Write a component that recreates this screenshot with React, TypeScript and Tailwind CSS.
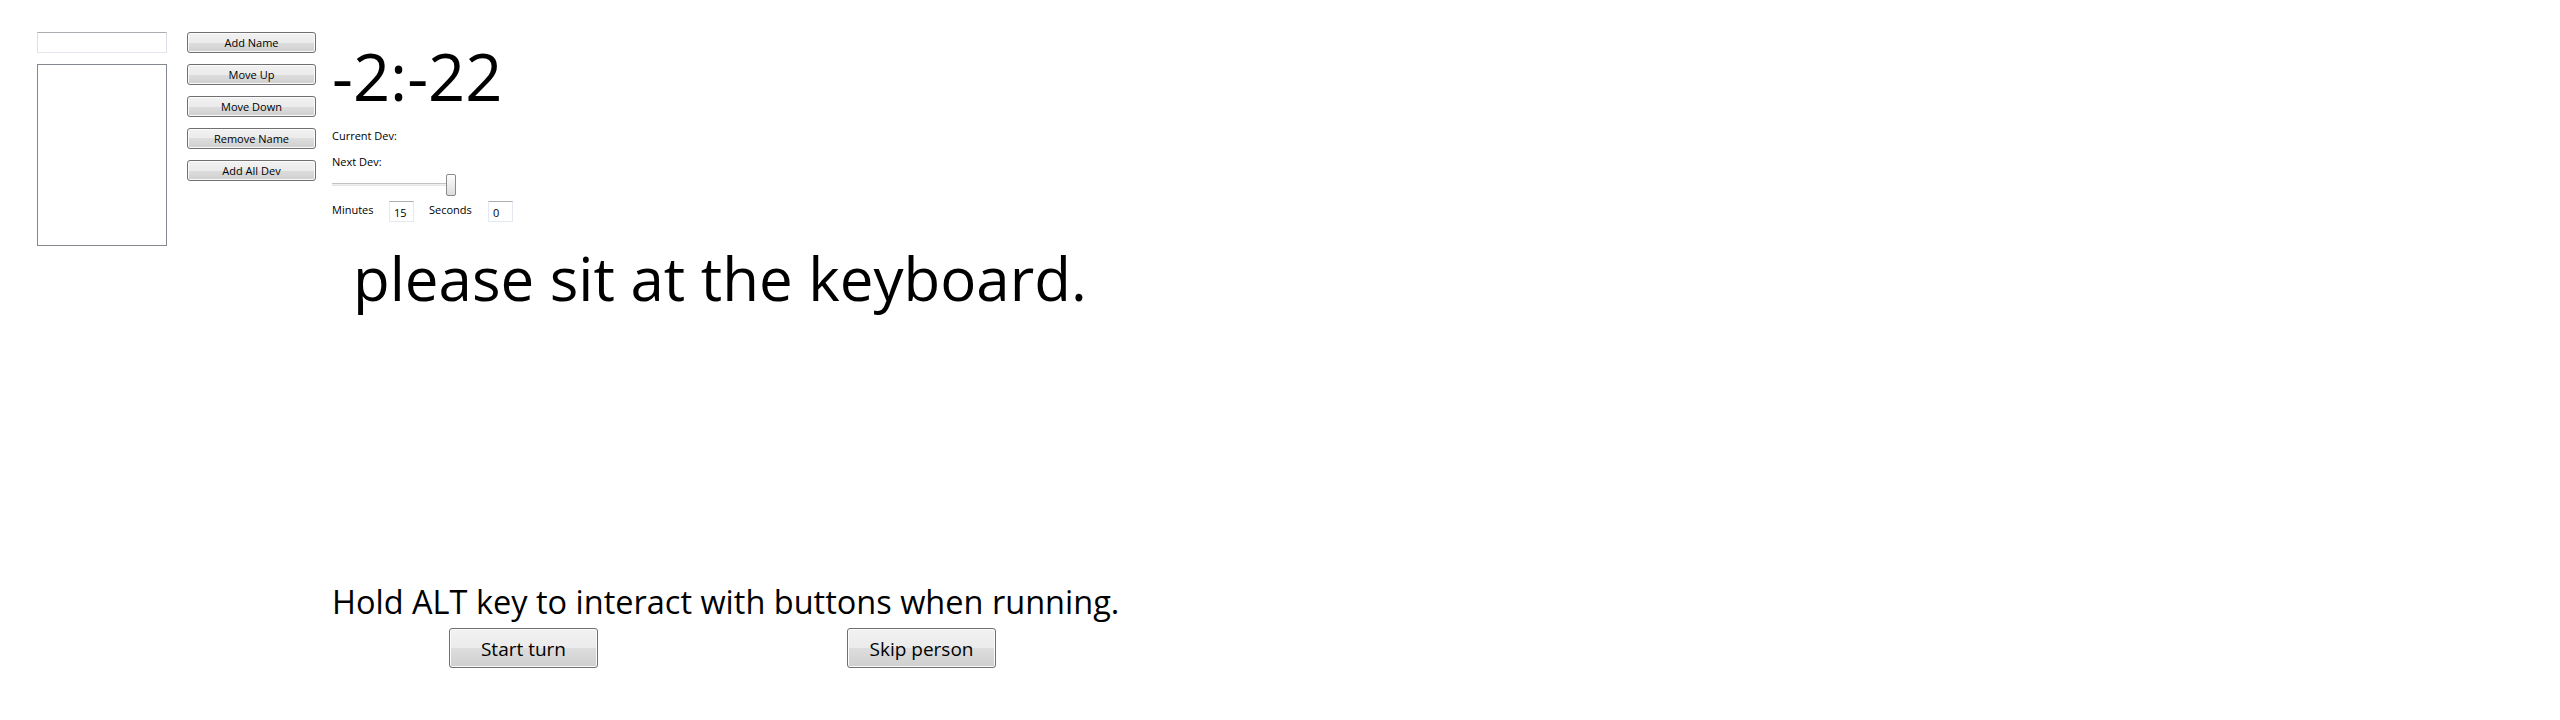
import React from 'react';

const font = "font-['Open_Sans',sans-serif]";

const SmallButton = ({ label }: { label: string }) => (
  <button className="h-[21px] w-[129px] rounded-[3px] border border-[#707070] bg-[linear-gradient(to_bottom,#f2f2f2_0%,#ebebeb_50%,#dddddd_50%,#cfcfcf_100%)] pt-[1px] text-center text-[11px] leading-[18px] text-black shadow-[inset_0_0_0_1px_#fbfbfb]">
    {label}
  </button>
);

const BigButton = ({ label }: { label: string }) => (
  <button className="h-[40px] w-[149px] rounded-[3px] border border-[#707070] bg-[linear-gradient(to_bottom,#f2f2f2_0%,#ebebeb_50%,#dddddd_50%,#cfcfcf_100%)] pt-[1px] text-center text-[19px] leading-[36px] text-black shadow-[inset_0_0_0_1px_#fbfbfb]">
    {label}
  </button>
);

const NumberBox = ({ value }: { value: string }) => (
  <div className="h-[21px] w-[25px] border border-[#e3e9ef] border-t-[#abadb3] pl-[4px] pt-[1px] text-[11px] leading-[19px] text-black">
    {value}
  </div>
);

export default function App() {
  const names = ['Add Name', 'Move Up', 'Move Down', 'Remove Name', 'Add All Dev'];

  return (
    <div className={`${font} flex min-h-[720px] w-[2560px] items-start bg-white pl-[37px] pt-[32px] text-black`}>
      {/* name entry + list */}
      <div className="flex w-[130px] flex-col gap-[11px]">
        <div className="h-[21px] border border-[#dbdfe6] border-t-[#abadb3] border-b-[#e3e9ef] bg-white" />
        <div className="h-[182px] border border-[#828790] bg-white" />
      </div>

      {/* list actions */}
      <div className="ml-[20px] flex w-[129px] flex-col gap-[11px]">
        {names.map((n) => (
          <SmallButton key={n} label={n} />
        ))}
      </div>

      {/* timer panel */}
      <div className="ml-[16px] flex flex-col">
        <div className="mt-[11px] h-[66px] text-[65px] leading-[66px]">-2:-22</div>
        <div className="mt-[19px] h-[16px] text-[11px] leading-[16px]">Current Dev:</div>
        <div className="mt-[10px] h-[16px] text-[11px] leading-[16px]">Next Dev:</div>

        <div className="relative mt-[4px] h-[22px] w-[124px]">
          <div className="absolute left-0 right-0 top-[9px] h-[3px] border-t border-[#c3c3c3] bg-[#f0f0f0] border-b border-b-[#e6e6e6]" />
          <div className="absolute right-0 top-0 h-[22px] w-[10px] rounded-[2px] border border-[#8a8a8a] bg-[linear-gradient(to_bottom,#fdfdfd,#dcdcdc)]" />
        </div>

        <div className="mt-[5px] flex h-[21px] items-start">
          <div className="w-[57px] text-[11px] leading-[17px]">Minutes</div>
          <NumberBox value="15" />
          <div className="ml-[15px] w-[59px] text-[11px] leading-[17px]">Seconds</div>
          <NumberBox value="0" />
        </div>

        <div className="ml-[21px] mt-[16px] h-[80px] whitespace-nowrap text-[60px] leading-[80px]">
          please sit at the keyboard.
        </div>

        <div className="mt-[264px] h-[40px] whitespace-nowrap text-[32.5px] leading-[40px]">
          Hold ALT key to interact with buttons when running.
        </div>

        <div className="mt-[6px] flex">
          <div className="ml-[117px]">
            <BigButton label="Start turn" />
          </div>
          <div className="ml-[249px]">
            <BigButton label="Skip person" />
          </div>
        </div>
      </div>
    </div>
  );
}
